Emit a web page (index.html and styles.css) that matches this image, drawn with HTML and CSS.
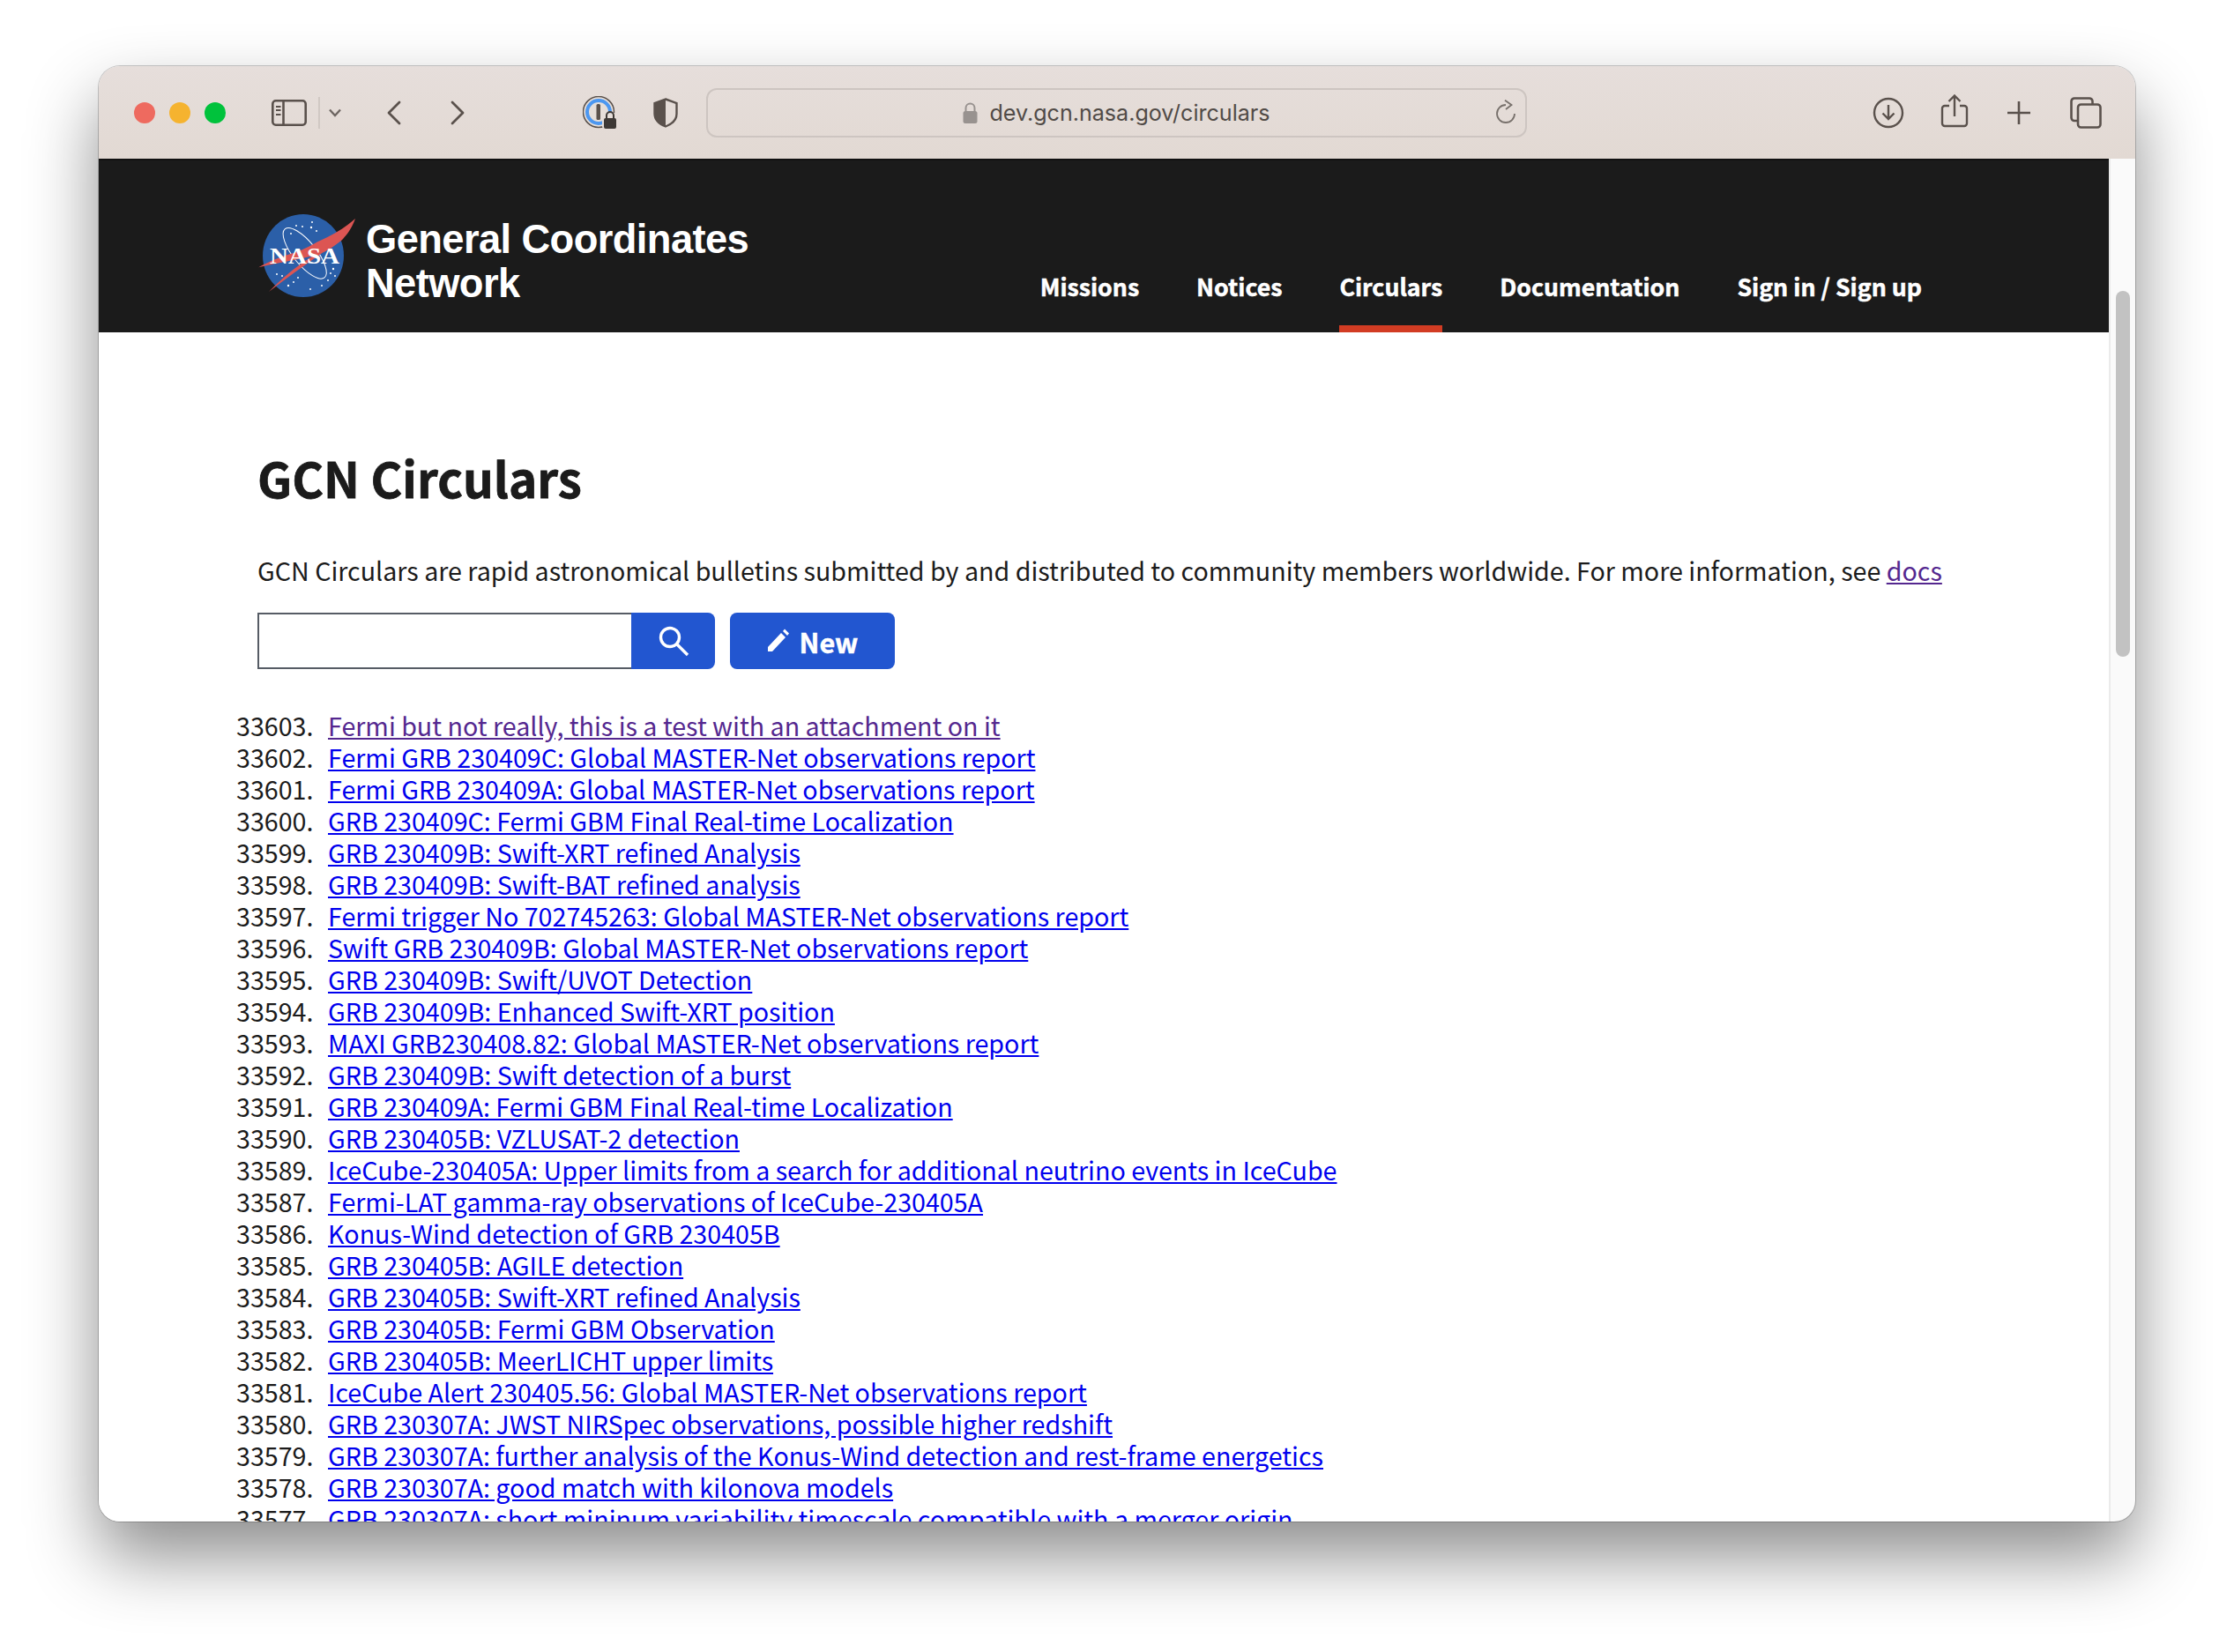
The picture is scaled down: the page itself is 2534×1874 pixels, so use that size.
FILE: index.html
```html
<!DOCTYPE html>
<html lang="en">
<head>
    <meta charset="utf-8">
    <title>GCN Circulars</title>
    <link rel="stylesheet" href="styles.css">
</head>
<body>
<div class="window">
    <div class="toolbar">
        <div class="lights">
            <span class="light light-red"></span>
            <span class="light light-yellow"></span>
            <span class="light light-green"></span>
        </div>
        <svg class="tool tool-sidebar" width="40" height="30" viewBox="0 0 40 30" fill="none" stroke="#5a514c" stroke-width="2.6">
            <rect x="1.3" y="1.3" width="37.400" height="27.400" rx="3.500"/>
            <path d="M13.500 1.500v27"/>
            <path d="M5 8h5.500M5 12h5.500M5 17h5.500" stroke-width="1.800"/>
        </svg>
        <span class="tool-divider"></span>
        <svg class="tool tool-chevron" width="14" height="10" viewBox="0 0 14 10" fill="none" stroke="#6e6662" stroke-width="2.400">
            <path d="M1 1.500 7 8l6-6.500"/>
        </svg>
        <svg class="tool tool-back" width="18" height="28" viewBox="0 0 18 28" fill="none" stroke="#5a514c" stroke-width="2.8" stroke-linecap="round" stroke-linejoin="round">
            <path d="M15 2 3 14l12 12"/>
        </svg>
        <svg class="tool tool-forward" width="18" height="28" viewBox="0 0 18 28" fill="none" stroke="#5a514c" stroke-width="2.8" stroke-linecap="round" stroke-linejoin="round">
            <path d="M3 2l12 12L3 26"/>
        </svg>
        <svg class="tool tool-pass" width="40" height="38" viewBox="0 0 40 38">
            <circle cx="18" cy="18" r="17.500" fill="#e6ded9" stroke="#5a514c" stroke-width="1.500"/>
            <circle cx="18" cy="18" r="13" fill="none" stroke="#4c97f0" stroke-width="4"/>
            <rect x="15.500" y="9" width="4.500" height="18" rx="1.500" fill="#5a514c"/>
            <rect x="22" y="19" width="16" height="18" rx="3" fill="#e6ded9"/>
            <rect x="24" y="25" width="14" height="12" rx="2" fill="#3d3835"/>
            <path d="M27 25v-3a4 4 0 0 1 8 0v3" fill="none" stroke="#3d3835" stroke-width="2"/>
        </svg>
        <svg class="tool tool-shield" width="28" height="34" viewBox="0 0 28 34">
            <path d="M14 1.500 26.500 6v12c0 7-5 11.500-12.500 14.500C6.500 29.500 1.500 25 1.500 18V6z" fill="none" stroke="#5a514c" stroke-width="2.400"/>
            <path d="M14 1.500 1.500 6v12c0 7 5 11.500 12.500 14.500z" fill="#5a514c"/>
        </svg>
        <div class="address">
            <svg class="address-lock" width="17" height="24" viewBox="0 0 17 24">
                <rect x="0.500" y="10" width="16" height="14" rx="2.500" fill="#98928f"/>
                <path d="M3.500 11V6.500a5 5 0 0 1 10 0V11" fill="none" stroke="#98928f" stroke-width="2"/>
            </svg>
            <span class="address-text">dev.gcn.nasa.gov/circulars</span>
            <svg class="address-reload" width="22" height="27" viewBox="0 0 22 27" fill="none" stroke="#77706b" stroke-width="1.800">
                <path d="M21 16a10 10 0 1 1-10-10"/>
                <path d="M10 .7 17.500 6 11 11"/>
            </svg>
        </div>
        <svg class="tool tool-download" width="36" height="36" viewBox="0 0 36 36" fill="none" stroke="#5a514c" stroke-width="2.400">
            <circle cx="18" cy="18" r="16"/>
            <path d="M18 9v16M11.500 18.500 18 25l6.500-6.500"/>
        </svg>
        <svg class="tool tool-share" width="32" height="38" viewBox="0 0 32 38" fill="none" stroke="#5a514c" stroke-width="2.400">
            <path d="M10 13H5a3 3 0 0 0-3 3v17a3 3 0 0 0 3 3h22a3 3 0 0 0 3-3V16a3 3 0 0 0-3-3h-5"/>
            <path d="M16 25V2M9.500 8 16 1.500 22.500 8"/>
        </svg>
        <svg class="tool tool-plus" width="28" height="28" viewBox="0 0 28 28" fill="none" stroke="#5a514c" stroke-width="2.600">
            <path d="M14 1v26M1 14h26"/>
        </svg>
        <svg class="tool tool-tabs" width="36" height="36" viewBox="0 0 36 36" fill="none" stroke="#5a514c" stroke-width="2.600">
            <path d="M8 27H5a3.500 3.500 0 0 1-3.500-3.500V5A3.500 3.500 0 0 1 5 1.500h17A3.500 3.500 0 0 1 25.500 5v3"/>
            <rect x="9" y="8.500" width="25.500" height="26" rx="3.500"/>
        </svg>
    </div>
    <div class="viewport">
        <div class="page">
            <header class="site-header">
                <a class="brand" href="#">
                    <svg class="brand-logo" width="112" height="100" viewBox="0 0 112 100">
                        <ellipse cx="52" cy="50" rx="46" ry="47" fill="#2b5fa8"/>
                        <g fill="#fff">
                            <circle cx="62" cy="12" r="1"/><circle cx="61" cy="18" r="1.200"/><circle cx="51" cy="17" r="1"/>
                            <circle cx="44" cy="16" r="1"/><circle cx="67" cy="22" r="1"/><circle cx="38" cy="25" r="1"/>
                            <circle cx="22" cy="71" r="1"/><circle cx="28" cy="73" r="1"/><circle cx="35" cy="84" r="1.200"/>
                            <circle cx="86" cy="65" r="1.200"/><circle cx="88" cy="73" r="1"/><circle cx="73" cy="84" r="1"/>
                            <circle cx="46" cy="75" r="1"/><circle cx="41" cy="80" r="1"/><circle cx="80" cy="78" r="1"/>
                            <circle cx="83" cy="70" r="1"/><circle cx="60" cy="88" r="1"/>
                        </g>
                        <ellipse cx="53.700" cy="47.300" rx="13" ry="35.500" transform="rotate(-39 53.700 47.300)" fill="none" stroke="#fff" stroke-width="1"/>
                        <path d="M1.300 63.300C16 55 30 50 41 47 54 43 64 36 71 33 85 27 100 18 111 8 106 22 98 30 95 33 85 41 78 45 71 48 60 51 50 53 41 55 28 58 14 60 1.300 63.300z" fill="#dc5553"/>
                        <path d="M13 91C35 68 62 48 98 30 66 52 40 70 13 91z" fill="#dc5553"/>
                        <text class="brand-nasa" x="14" y="59" textLength="79" lengthAdjust="spacingAndGlyphs">NASA</text>
                    </svg>
                    <span class="brand-name">General Coordinates<br>Network</span>
                </a>
                <nav class="nav">
                    <a class="nav-link" href="#">Missions</a>
                    <a class="nav-link" href="#">Notices</a>
                    <a class="nav-link nav-current" href="#">Circulars</a>
                    <a class="nav-link" href="#">Documentation</a>
                    <a class="nav-link" href="#">Sign in / Sign up</a>
                </nav>
            </header>
            <main class="content">
                <h1 class="title">GCN Circulars</h1>
                <p class="intro">GCN Circulars are rapid astronomical bulletins submitted by and distributed to community members worldwide. For more information, see <a class="visited" href="#">docs</a></p>
                <div class="actions">
                    <form class="search">
                        <input class="search-input" type="text">
                        <button class="btn btn-search" type="button">
                            <svg width="36" height="36" viewBox="0 0 36 36" fill="none" stroke="#fff" stroke-width="3.400">
                                <circle cx="14" cy="14" r="10.500"/>
                                <path d="M22 22l12 12"/>
                            </svg>
                        </button>
                    </form>
                    <button class="btn btn-new" type="button">
                        <svg width="27" height="28" viewBox="0 0 27 28" fill="#fff">
                            <path d="M1 21 16 5l5 5L6 26H1z"/>
                            <path d="M18 3l2-2.500 5 5-2 2.500z"/>
                        </svg>
                        <span class="btn-label">New</span>
                    </button>
                </div>
                <ol class="circulars">
                    <li class="row"><span class="num">33603.</span><a class="visited" href="#">Fermi but not really, this is a test with an attachment on it</a></li>
                    <li class="row"><span class="num">33602.</span><a href="#">Fermi GRB 230409C: Global MASTER-Net observations report</a></li>
                    <li class="row"><span class="num">33601.</span><a href="#">Fermi GRB 230409A: Global MASTER-Net observations report</a></li>
                    <li class="row"><span class="num">33600.</span><a href="#">GRB 230409C: Fermi GBM Final Real-time Localization</a></li>
                    <li class="row"><span class="num">33599.</span><a href="#">GRB 230409B: Swift-XRT refined Analysis</a></li>
                    <li class="row"><span class="num">33598.</span><a href="#">GRB 230409B: Swift-BAT refined analysis</a></li>
                    <li class="row"><span class="num">33597.</span><a href="#">Fermi trigger No 702745263: Global MASTER-Net observations report</a></li>
                    <li class="row"><span class="num">33596.</span><a href="#">Swift GRB 230409B: Global MASTER-Net observations report</a></li>
                    <li class="row"><span class="num">33595.</span><a href="#">GRB 230409B: Swift/UVOT Detection</a></li>
                    <li class="row"><span class="num">33594.</span><a href="#">GRB 230409B: Enhanced Swift-XRT position</a></li>
                    <li class="row"><span class="num">33593.</span><a href="#">MAXI GRB230408.82: Global MASTER-Net observations report</a></li>
                    <li class="row"><span class="num">33592.</span><a href="#">GRB 230409B: Swift detection of a burst</a></li>
                    <li class="row"><span class="num">33591.</span><a href="#">GRB 230409A: Fermi GBM Final Real-time Localization</a></li>
                    <li class="row"><span class="num">33590.</span><a href="#">GRB 230405B: VZLUSAT-2 detection</a></li>
                    <li class="row"><span class="num">33589.</span><a href="#">IceCube-230405A: Upper limits from a search for additional neutrino events in IceCube</a></li>
                    <li class="row"><span class="num">33587.</span><a href="#">Fermi-LAT gamma-ray observations of IceCube-230405A</a></li>
                    <li class="row"><span class="num">33586.</span><a href="#">Konus-Wind detection of GRB 230405B</a></li>
                    <li class="row"><span class="num">33585.</span><a href="#">GRB 230405B: AGILE detection</a></li>
                    <li class="row"><span class="num">33584.</span><a href="#">GRB 230405B: Swift-XRT refined Analysis</a></li>
                    <li class="row"><span class="num">33583.</span><a href="#">GRB 230405B: Fermi GBM Observation</a></li>
                    <li class="row"><span class="num">33582.</span><a href="#">GRB 230405B: MeerLICHT upper limits</a></li>
                    <li class="row"><span class="num">33581.</span><a href="#">IceCube Alert 230405.56: Global MASTER-Net observations report</a></li>
                    <li class="row"><span class="num">33580.</span><a href="#">GRB 230307A: JWST NIRSpec observations, possible higher redshift</a></li>
                    <li class="row"><span class="num">33579.</span><a href="#">GRB 230307A: further analysis of the Konus-Wind detection and rest-frame energetics</a></li>
                    <li class="row"><span class="num">33578.</span><a href="#">GRB 230307A: good match with kilonova models</a></li>
                    <li class="row"><span class="num">33577.</span><a href="#">GRB 230307A: short mininum variability timescale compatible with a merger origin</a></li>
                </ol>
            </main>
        </div>
        <div class="scrollbar">
            <div class="scrollbar-thumb"></div>
        </div>
    </div>
</div>
</body>
</html>
```

FILE: styles.css
```css
html, body {
    margin: 0;
    padding: 0;
    height: 100%;
    overflow: hidden;
    background: #fff;
}

body {
    padding: 75px 0 0 112px;
    box-sizing: border-box;
    font-family: "Noto Sans CJK SC", "Noto Sans", sans-serif;
}

.window {
    width: 2310px;
    height: 1651px;
    display: flex;
    flex-direction: column;
    border-radius: 24px;
    overflow: hidden;
    background: #fafafa;
    box-shadow: 0 0 0 1px rgba(0, 0, 0, 0.2), 0 40px 80px rgba(0, 0, 0, 0.45);
}

/* browser chrome */
.toolbar {
    height: 105px;
    flex: none;
    display: flex;
    align-items: center;
    background: linear-gradient(#e6dedb, #e2d9d3);
}

.lights {
    display: flex;
    gap: 16px;
    margin-left: 40px;
}

.light {
    width: 24px;
    height: 24px;
    border-radius: 50%;
}

.light-red { background: #ee6a5f; }
.light-yellow { background: #f5b32f; }
.light-green { background: #00c23c; }

.tool { flex: none; }
.tool-sidebar { margin-left: 52px; }
.tool-divider {
    width: 2px;
    height: 36px;
    margin-left: 13px;
    background: #d0c8c3;
}
.tool-chevron { margin-left: 10px; }
.tool-back { margin-left: 51px; }
.tool-forward { margin-left: 54px; }
.tool-pass { margin-left: 133px; }
.tool-shield { margin-left: 40px; }
.tool-download { margin-left: 392px; }
.tool-share { margin: 0 0 4px 41px; }
.tool-plus { margin-left: 43px; }
.tool-tabs { margin-left: 44px; }

.address {
    width: 931px;
    height: 56px;
    margin-left: 32px;
    flex: none;
    box-sizing: border-box;
    border: 2px solid #cdc5c1;
    border-radius: 12px;
    display: flex;
    align-items: center;
    justify-content: center;
    gap: 13px;
    position: relative;
}

.address-text {
    font-family: Inter, sans-serif;
    font-size: 25.100px;
    color: #514b47;
}

.address-reload {
    position: absolute;
    right: 11px;
    top: 11px;
}

/* page */
.viewport {
    flex: 1;
    min-height: 0;
    display: flex;
}

.page {
    flex: 1;
    min-width: 0;
    background: #fff;
    overflow: hidden;
}

.scrollbar {
    width: 30px;
    flex: none;
    box-sizing: border-box;
    padding: 150px 6px 0;
    border-left: 2px solid #ebebeb;
}

.scrollbar-thumb {
    height: 415px;
    border-radius: 8px;
    background: #c2c2c2;
}

.site-header {
    height: 197px;
    box-sizing: border-box;
    border-top: 2px solid #111;
    background: #1b1b1b;
    display: flex;
    align-items: flex-end;
    justify-content: space-between;
    padding: 0 212px 0 180px;
}

.brand {
    display: flex;
    align-items: flex-start;
    gap: 11px;
    color: #fff;
    text-decoration: none;
    align-self: flex-start;
    margin-top: 58px;
}

.brand-nasa {
    font-family: "Liberation Serif", serif;
    font-weight: 700;
    font-size: 26px;
    fill: #fff;
}

.brand-name {
    margin-top: 7px;
    font-family: "Liberation Sans", sans-serif;
    font-weight: 700;
    font-size: 45.300px;
    line-height: 50px;
    letter-spacing: -0.6px;
    font-kerning: none;
}

.nav {
    display: flex;
    gap: 65px;
}

.nav-link {
    height: 80px;
    box-sizing: border-box;
    padding-top: 8px;
    color: #fff;
    font-weight: 700;
    font-size: 26.700px;
    line-height: 40px;
    text-decoration: none;
    -webkit-text-stroke: 0.5px #fff;
}

.nav-current {
    border-bottom: 8px solid #d23c23;
}

.content {
    padding: 130px 0 0 180px;
}

.title {
    margin: 0;
    font-size: 54.700px;
    line-height: 70px;
    font-weight: 700;
    color: #1b1b1b;
    -webkit-text-stroke: 0.8px #1b1b1b;
}

.intro {
    margin: 50px 0 0;
    font-size: 28.650px;
    line-height: 40px;
    color: #1b1b1b;
}

a { color: #0000ee; }
a.visited { color: #54278f; }

.actions {
    display: flex;
    gap: 17px;
    margin-top: 28px;
}

.search { display: flex; margin: 0; }

.search-input {
    width: 424px;
    height: 64px;
    box-sizing: border-box;
    border: 2px solid #565c65;
    border-right: 0;
    padding: 0;
    margin: 0;
    background: #fff;
}

.btn {
    height: 64px;
    border: 0;
    margin: 0;
    padding: 0;
    background: #2256d0;
    color: #fff;
    font-family: inherit;
    display: flex;
    align-items: center;
    justify-content: center;
}

.btn-search {
    width: 95px;
    border-radius: 0 8px 8px 0;
}

.btn-new {
    width: 187px;
    gap: 10px;
    border-radius: 8px;
    font-size: 30.500px;
    font-weight: 700;
}

.btn-label {
    margin-top: 2px;
    -webkit-text-stroke: 0.5px #fff;
}

.circulars {
    list-style: none;
    margin: 46px 0 0 -24px;
    padding: 0;
    font-size: 28.650px;
    line-height: 36px;
    color: #1b1b1b;
}

.row { display: flex; white-space: nowrap; }

.num {
    width: 104px;
    flex: none;
}
```
